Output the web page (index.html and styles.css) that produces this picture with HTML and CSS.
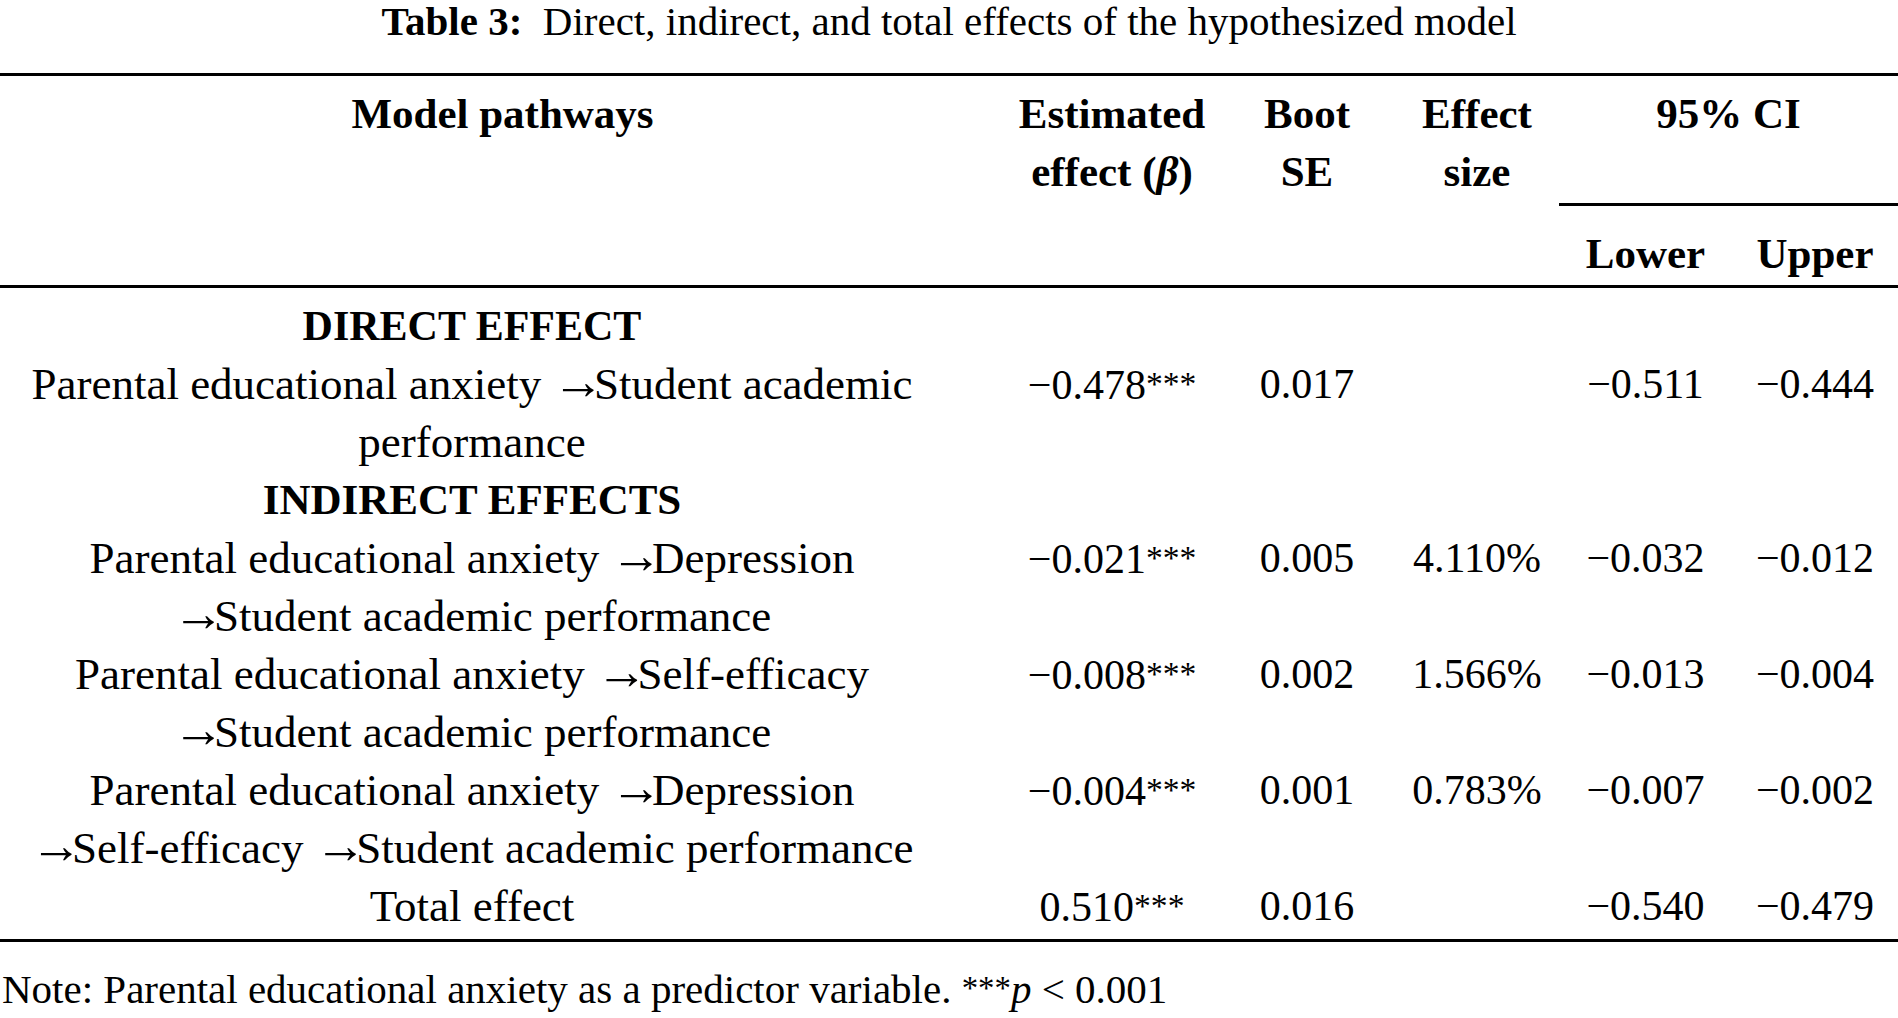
FILE: index.html
```html
<!DOCTYPE html>
<html lang="en">
<head>
<meta charset="utf-8">
<title>Table 3</title>
<link rel="stylesheet" href="styles.css">
</head>
<body>
<div class="page">
  <div class="caption"><span class="cap-label">Table 3:</span>&nbsp; Direct, indirect, and total effects of the hypothesized model</div>
  <div class="tbl">
    <div class="thead">
      <div class="th th-path">Model pathways</div>
      <div class="th th-est">Estimated<br>effect (<i>β</i>)</div>
      <div class="th th-boot">Boot<br>SE</div>
      <div class="th th-eff">Effect<br>size</div>
      <div class="th th-ci">95% CI</div>
      <div class="th th-low">Lower</div>
      <div class="th th-up">Upper</div>
    </div>
    <div class="tbody">
      <div class="td path sec sec-d">DIRECT EFFECT</div>
      <div class="td num"></div><div class="td num"></div><div class="td num"></div><div class="td num"></div><div class="td num"></div>

      <div class="td path">Parental educational anxiety <span class="arr">→</span>Student academic<br>performance</div>
      <div class="td num">−0.478<span class="sig">***</span></div>
      <div class="td num">0.017</div>
      <div class="td num"></div>
      <div class="td num">−0.511</div>
      <div class="td num">−0.444</div>

      <div class="td path sec sec-i">INDIRECT EFFECTS</div>
      <div class="td num"></div><div class="td num"></div><div class="td num"></div><div class="td num"></div><div class="td num"></div>

      <div class="td path">Parental educational anxiety <span class="arr">→</span>Depression<br><span class="arr">→</span>Student academic performance</div>
      <div class="td num">−0.021<span class="sig">***</span></div>
      <div class="td num">0.005</div>
      <div class="td num">4.110%</div>
      <div class="td num">−0.032</div>
      <div class="td num">−0.012</div>

      <div class="td path">Parental educational anxiety <span class="arr">→</span>Self-efficacy<br><span class="arr">→</span>Student academic performance</div>
      <div class="td num">−0.008<span class="sig">***</span></div>
      <div class="td num">0.002</div>
      <div class="td num">1.566%</div>
      <div class="td num">−0.013</div>
      <div class="td num">−0.004</div>

      <div class="td path">Parental educational anxiety <span class="arr">→</span>Depression<br><span class="arr">→</span>Self-efficacy <span class="arr">→</span>Student academic performance</div>
      <div class="td num">−0.004<span class="sig">***</span></div>
      <div class="td num">0.001</div>
      <div class="td num">0.783%</div>
      <div class="td num">−0.007</div>
      <div class="td num">−0.002</div>

      <div class="td path">Total effect</div>
      <div class="td num">0.510<span class="sig">***</span></div>
      <div class="td num">0.016</div>
      <div class="td num"></div>
      <div class="td num">−0.540</div>
      <div class="td num">−0.479</div>
    </div>
  </div>
  <p class="note">Note: Parental educational anxiety as a predictor variable. <span class="sig-n">***</span><i>p</i> &lt; 0.001</p>
</div>
</body>
</html>
```

FILE: styles.css
```css
* {
  box-sizing: border-box;
}

html, body {
  margin: 0;
  padding: 0;
  background: #ffffff;
}

body {
  font-family: "Liberation Serif", "Times New Roman", serif;
  color: #000000;
}

.page {
  width: 1898px;
}

.caption {
  font-size: 41px;
  line-height: 37px;
  height: 40px;
  padding-top: 3px;
  text-align: center;
  margin-bottom: 33px;
  white-space: nowrap;
}

.cap-label {
  font-weight: bold;
}

.tbl {
  border-top: 3px solid #000;
  border-bottom: 3px solid #000;
}

.thead,
.tbody {
  display: grid;
  grid-template-columns: 1005px 214px 176px 164px 173px 166px;
}

.thead {
  grid-template-rows: 130px 82px;
}

.th {
  font-weight: bold;
  font-size: 43px;
  line-height: 58px;
  text-align: center;
  white-space: nowrap;
  border-bottom: 3px solid #000;
  padding-top: 9px;
}

.th-path { grid-column: 1; grid-row: 1 / 3; }
.th-est  { grid-column: 2; grid-row: 1 / 3; }
.th-boot { grid-column: 3; grid-row: 1 / 3; }
.th-eff  { grid-column: 4; grid-row: 1 / 3; }
.th-ci   { grid-column: 5 / 7; grid-row: 1; }
.th-low  { grid-column: 5; grid-row: 2; padding-top: 19px; }
.th-up   { grid-column: 6; grid-row: 2; padding-top: 19px; }

.th i {
  font-weight: bold;
}

.tbody {
  padding-top: 9px;
  padding-bottom: 3px;
}

.td {
  line-height: 58px;
  text-align: center;
  white-space: nowrap;
}

.path {
  font-size: 45px;
  padding-right: 61px;
}

.sec {
  font-weight: bold;
}

.sec-d {
  font-size: 42px;
}

.sec-i {
  font-size: 43px;
}

.num {
  font-size: 42px;
}

.arr {
  font-size: 1.15em;
  line-height: 0;
  letter-spacing: -0.2em;
}

.sig {
  font-size: 0.8em;
  vertical-align: 0.12em;
}

.note {
  margin: 17px 0 0 0;
  padding-left: 2px;
  font-size: 41px;
  line-height: 58px;
  white-space: nowrap;
}

.sig-n {
  font-size: 0.8em;
  vertical-align: 0.12em;
}
```
